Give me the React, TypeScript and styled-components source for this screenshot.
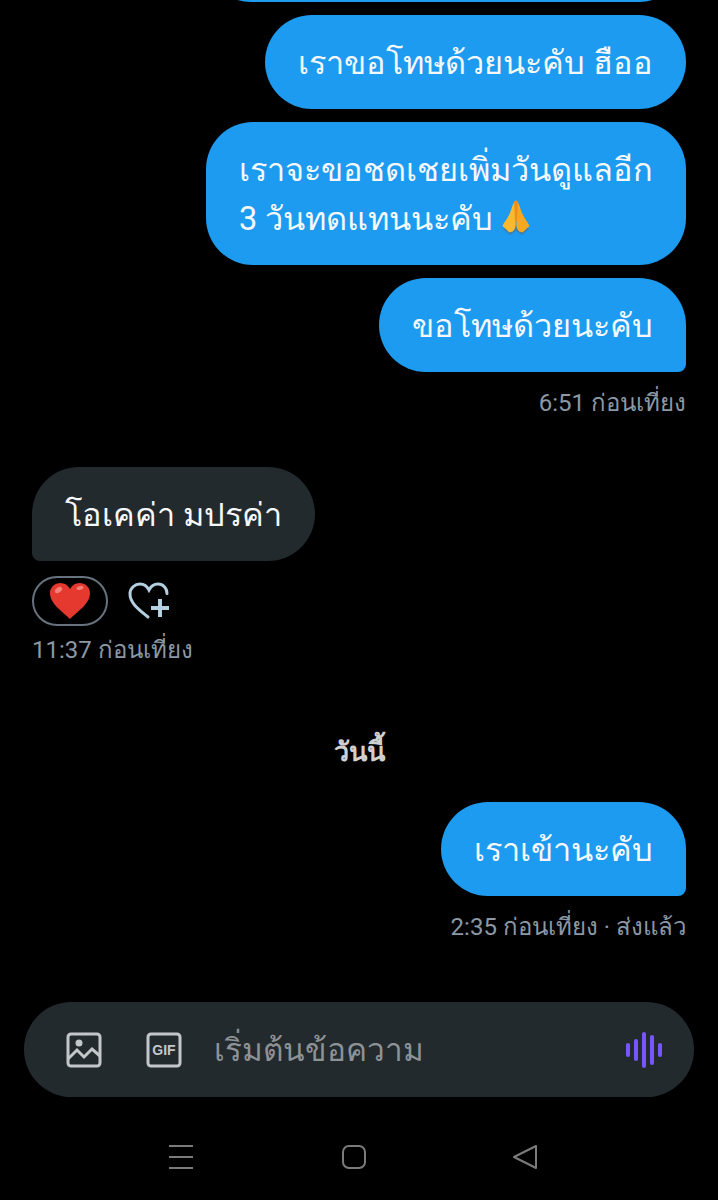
import { createGlobalStyle, styled } from 'styled-components';

const GlobalStyle = createGlobalStyle`
  html, body {
    margin: 0;
    padding: 0;
    background: #000;
  }
`;

const Screen = styled.main`
  width: 718px;
  height: 1200px;
  background: #000;
  display: flex;
  flex-direction: column;
  overflow: hidden;
  font-family: Roboto, "Noto Sans", "Liberation Sans", "DejaVu Sans", sans-serif;
`;

const Thread = styled.section`
  flex: 1;
  min-height: 0;
  display: flex;
  flex-direction: column;
  justify-content: flex-end;
  padding: 0 32px;
`;

const Reactions = styled.div`
  display: flex;
  align-items: center;
  gap: 20px;
  margin-top: 15px;
  flex-shrink: 0;
`;

const TimeStamp = styled.div<{ $mine?: boolean }>`
  align-self: ${(p) => (p.$mine ? 'flex-end' : 'flex-start')};
  flex-shrink: 0;
  font-size: 24px;
  line-height: 30px;
  color: #8b98a5;
  margin-top: 16px;

  ${Reactions} + & {
    margin-top: 9px;
  }
`;

const Bubble = styled.div<{ $mine?: boolean; $tail?: boolean }>`
  align-self: ${(p) => (p.$mine ? 'flex-end' : 'flex-start')};
  flex-shrink: 0;
  box-sizing: border-box;
  padding: 23.5px 33px 21.5px;
  font-size: 32.5px;
  line-height: 49px;
  white-space: nowrap;
  color: #f5f8fa;
  background: ${(p) => (p.$mine ? '#1d9bf0' : '#232a2e')};
  border-radius: 47px;
  ${(p) => p.$tail && (p.$mine ? 'border-bottom-right-radius: 8px;' : 'border-bottom-left-radius: 8px;')}
  margin-top: 13px;

  ${TimeStamp} + & {
    margin-top: 49px;
  }
`;

// the message above this one has scrolled away, only its lower edge shows
const ClippedBubble = styled(Bubble)`
  width: 482px;
  height: 94px;
`;

const ReactionPill = styled.div`
  width: 76px;
  height: 50px;
  box-sizing: border-box;
  border: 2px solid #66737e;
  border-radius: 25px;
  display: flex;
  align-items: center;
  justify-content: center;
`;

const DayLabel = styled.div`
  align-self: center;
  flex-shrink: 0;
  font-size: 27px;
  line-height: 34px;
  font-weight: 700;
  color: #d0d0d0;
  margin-top: 70px;
  margin-bottom: 20px;
`;

const Composer = styled.div`
  margin: 60px 24px 0;
  height: 95px;
  flex-shrink: 0;
  background: #232a2e;
  border-radius: 48px;
  display: flex;
  align-items: center;
  padding: 0 32px 0 42px;
`;

const ToolIcon = styled.svg`
  width: 36px;
  height: 36px;
  flex-shrink: 0;
  margin-right: 44px;
  &:nth-of-type(2) {
    margin-right: 32px;
  }
`;

const Placeholder = styled.div`
  flex: 1;
  font-size: 31.5px;
  color: #8d9296;
`;

const NavBar = styled.nav`
  height: 103px;
  flex-shrink: 0;
  box-sizing: border-box;
  padding: 16px 181px 0 168px;
  display: flex;
  align-items: center;
  justify-content: space-between;
`;

const EmojiIcon = styled.svg`
  vertical-align: -7px;
`;

function PrayEmoji() {
  return (
    <EmojiIcon width="30" height="38" viewBox="0 0 30 38">
      <path d="M2 30 L9 36 L15 32 L21 36 L28 30 L21 26 L9 26Z" fill="#3b7fb3" />
      <path d="M14.6 2 C12 3 11 9 9 14 C7 19 3 23 1.5 27 L8 33 C11 34 14 31 14.6 27Z" fill="#fbb92f" />
      <path d="M15.4 2 C18 3 19 9 21 14 C23 19 27 23 28.5 27 L22 33 C19 34 16 31 15.4 27Z" fill="#f6a821" />
      <path d="M13 3 L15 1 L17 3 L16 22 L14 22Z" fill="#ed8f1c" />
    </EmojiIcon>
  );
}

function Heart() {
  return (
    <svg width="42" height="38" viewBox="0 0 42 38">
      <path d="M21 37 C14 30 1 22 1 11 C1 5 6 1 11.500 1 C15.500 1 19 3 21 7 C23 3 26.500 1 30.500 1 C36 1 41 5 41 11 C41 22 28 30 21 37Z" fill="#e5392f" />
      <ellipse cx="9.500" cy="8" rx="4" ry="2.500" fill="#f4827a" transform="rotate(-35 9.500 8)" />
      <ellipse cx="31" cy="6" rx="3.500" ry="1.800" fill="#f4827a" transform="rotate(-15 31 6)" />
    </svg>
  );
}

function AddReaction() {
  return (
    <svg width="42" height="38" viewBox="0 0 42 38" fill="none" stroke="#b4cfe0">
      <path d="M20 35 C13 29 2 22 2 12 C2 6 7 2 12 2 C16 2 19 4 21 8 C23 4 26 2 30 2 C35 2 39 6 39 11.500" strokeWidth="3" strokeLinecap="round" />
      <path d="M32 17 V35 M23 26 H41" strokeWidth="4" />
    </svg>
  );
}

export default function App() {
  return (
    <>
      <GlobalStyle />
      <Screen>
        <Thread>
          <ClippedBubble $mine />
          <Bubble $mine>เราขอโทษด้วยนะคับ ฮืออ</Bubble>
          <Bubble $mine>
            เราจะขอชดเชยเพิ่มวันดูแลอีก
            <br />
            3 วันทดแทนนะคับ <PrayEmoji />
          </Bubble>
          <Bubble $mine $tail>ขอโทษด้วยนะคับ</Bubble>
          <TimeStamp $mine>6:51 ก่อนเที่ยง</TimeStamp>
          <Bubble $tail>โอเคค่า มปรค่า</Bubble>
          <Reactions>
            <ReactionPill><Heart /></ReactionPill>
            <AddReaction />
          </Reactions>
          <TimeStamp>11:37 ก่อนเที่ยง</TimeStamp>
          <DayLabel>วันนี้</DayLabel>
          <Bubble $mine $tail>เราเข้านะคับ</Bubble>
          <TimeStamp $mine>2:35 ก่อนเที่ยง · ส่งแล้ว</TimeStamp>
        </Thread>
        <Composer>
          <ToolIcon viewBox="0 0 36 36" fill="none" stroke="#c4c7c9" strokeWidth="3">
            <rect x="2" y="2" width="32" height="32" rx="3" />
            <circle cx="13" cy="11" r="3.500" fill="#c4c7c9" stroke="none" />
            <path d="M2 27 L11 18 L18 25 L26 17 L34 24" />
          </ToolIcon>
          <ToolIcon viewBox="0 0 36 36" fill="none" stroke="#c4c7c9" strokeWidth="3">
            <rect x="2" y="2" width="32" height="32" rx="3" />
            <text x="18" y="23" fontFamily="Liberation Sans" fontWeight="700" fontSize="14" fill="#c4c7c9" stroke="none" textAnchor="middle">GIF</text>
          </ToolIcon>
          <Placeholder>เริ่มต้นข้อความ</Placeholder>
          <svg width="36" height="38" viewBox="0 0 36 38" stroke="#7856ff" strokeWidth="4" strokeLinecap="round">
            <path d="M2 14 V24 M10 10 V28 M18 3 V35 M26 6 V32 M34 14 V24" />
          </svg>
        </Composer>
        <NavBar>
          <svg width="26" height="24" viewBox="0 0 26 24" stroke="#7b7b7b" strokeWidth="2">
            <path d="M1 1 H25 M1 12 H25 M1 23 H25" />
          </svg>
          <svg width="24" height="24" viewBox="0 0 24 24" fill="none" stroke="#7b7b7b" strokeWidth="2">
            <rect x="1" y="1" width="22" height="22" rx="6" />
          </svg>
          <svg width="24" height="24" viewBox="0 0 24 24" fill="none" stroke="#7b7b7b" strokeWidth="2" strokeLinejoin="round">
            <path d="M1 12 L23 1 V23Z" />
          </svg>
        </NavBar>
      </Screen>
    </>
  );
}
